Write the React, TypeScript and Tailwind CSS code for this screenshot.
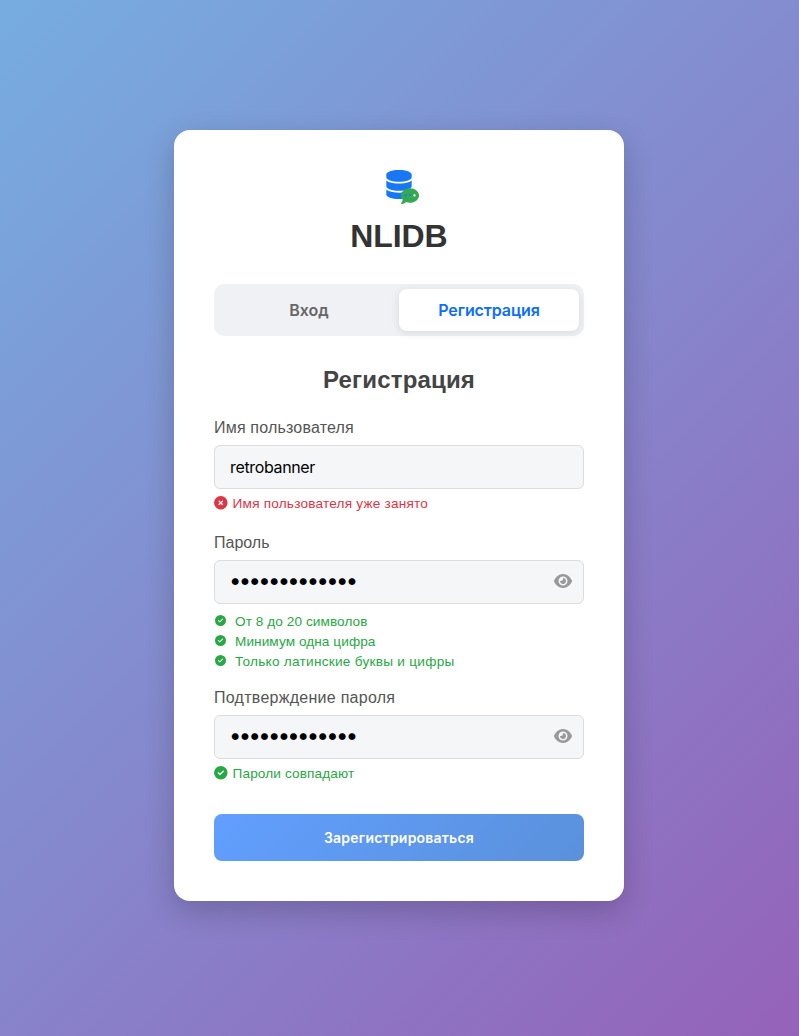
import React from "react";
import { FaCircleCheck, FaCircleXmark, FaCommentDots, FaDatabase, FaEye } from "react-icons/fa6";

const arial = "font-['Liberation_Sans',sans-serif]";
const inter = "font-['Inter',sans-serif]";
const field = "block h-11 w-full rounded-md border border-[#dddddd] bg-[#f5f6f8] pr-[15px] text-black outline-none";

function Label({ children, className = "" }: { children: React.ReactNode; className?: string }) {
  return (
    <label className="mb-[7px] flex h-5 items-center text-base leading-5 text-[#555555]">
      <span className={className}>{children}</span>
    </label>
  );
}

function PasswordField({ name }: { name: string }) {
  return (
    <div className="relative">
      <input
        type="password"
        name={name}
        defaultValue="retrobanner12"
        className={`${field} ${inter} pb-[4px] pl-[14px] text-[22px] tracking-[-2.65px]`}
      />
      <FaEye className="absolute top-[13px] right-3 h-4 w-[18px] text-[#999999]" />
    </div>
  );
}

function Rule({ children, className }: { children: React.ReactNode; className: string }) {
  return (
    <li className="flex h-5 items-center text-[13.6px]">
      <FaCircleCheck className="mr-[9px] mb-[3px] ml-px size-[11px]" />
      <span className={className}>{children}</span>
    </li>
  );
}

export default function App() {
  return (
    <div className={`flex h-[1036px] justify-center bg-[linear-gradient(135deg,#76ade0,#9562b9)] pt-[130px] pr-px ${arial}`}>
      <main className="h-[771px] w-[450px] rounded-2xl bg-white px-10 pt-10 shadow-[0_10px_30px_rgba(0,0,0,0.2)]">
        <header className="flex flex-col items-center">
          <div className="relative mr-px h-[30px] w-[26px]">
            <FaDatabase className="h-[29px] w-[26px] text-[#1877f2]" />
            <FaCommentDots className="absolute top-[17px] left-[15px] size-[18px] text-[#34a853]" />
          </div>
          <h1 className="mt-4 h-10 text-[32px] leading-10 font-bold tracking-[-0.1px] text-[#333333]">NLIDB</h1>
        </header>

        <div className={`mt-7 flex h-[52px] rounded-[10px] bg-[#f0f1f5] p-[5px] text-base font-semibold ${inter}`}>
          <button className="w-[180px] text-[#666666]"><span>Вход</span></button>
          <button className="w-[180px] rounded-lg bg-white text-[#0d6efd] shadow-[0_2px_10px_rgba(0,0,0,0.1)]">
            <span className="tracking-[-0.09px]">Регистрация</span>
          </button>
        </div>

        <h2 className="mt-7 flex h-8 items-center justify-center text-2xl font-bold text-[#444444]">
          <span className="tracking-[0.18px]">Регистрация</span>
        </h2>

        <form>
          <div className="mt-[22px]">
            <Label className="tracking-[0.19px]">Имя пользователя</Label>
            <input defaultValue="retrobanner" className={`${field} ${inter} pl-[15px] text-base tracking-[-0.35px]`} />
            <p className="mt-[5px] flex h-5 items-center gap-[5px] text-[13.6px] text-[#dc3545]">
              <FaCircleXmark className="mb-0.5 size-[13.6px]" />
              <span className="tracking-[0.21px]">Имя пользователя уже занято</span>
            </p>
          </div>
          <div className="mt-[19px]">
            <Label>Пароль</Label>
            <PasswordField name="password" />
            <ul className="mt-2 text-[#28a745]">
              <Rule className="tracking-[0.08px]">От 8 до 20 символов</Rule>
              <Rule className="tracking-[0.08px]">Минимум одна цифра</Rule>
              <Rule className="tracking-[0.27px]">Только латинские буквы и цифры</Rule>
            </ul>
          </div>
          <div className="mt-4">
            <Label className="tracking-[0.27px]">Подтверждение пароля</Label>
            <PasswordField name="confirmation" />
            <p className="mt-[5px] flex h-5 items-center gap-[5px] text-[13.6px] text-[#28a745]">
              <FaCircleCheck className="mb-0.5 size-[13.6px]" />
              <span className="tracking-[0.13px]">Пароли совпадают</span>
            </p>
          </div>
          <button type="button" className={`mt-[30px] flex h-[47px] w-full items-center justify-center rounded-lg bg-[linear-gradient(135deg,#619fff,#5b91db)] text-sm font-semibold text-white ${inter}`}>
            <span className="tracking-[0.22px]">Зарегистрироваться</span>
          </button>
        </form>
      </main>
    </div>
  );
}
